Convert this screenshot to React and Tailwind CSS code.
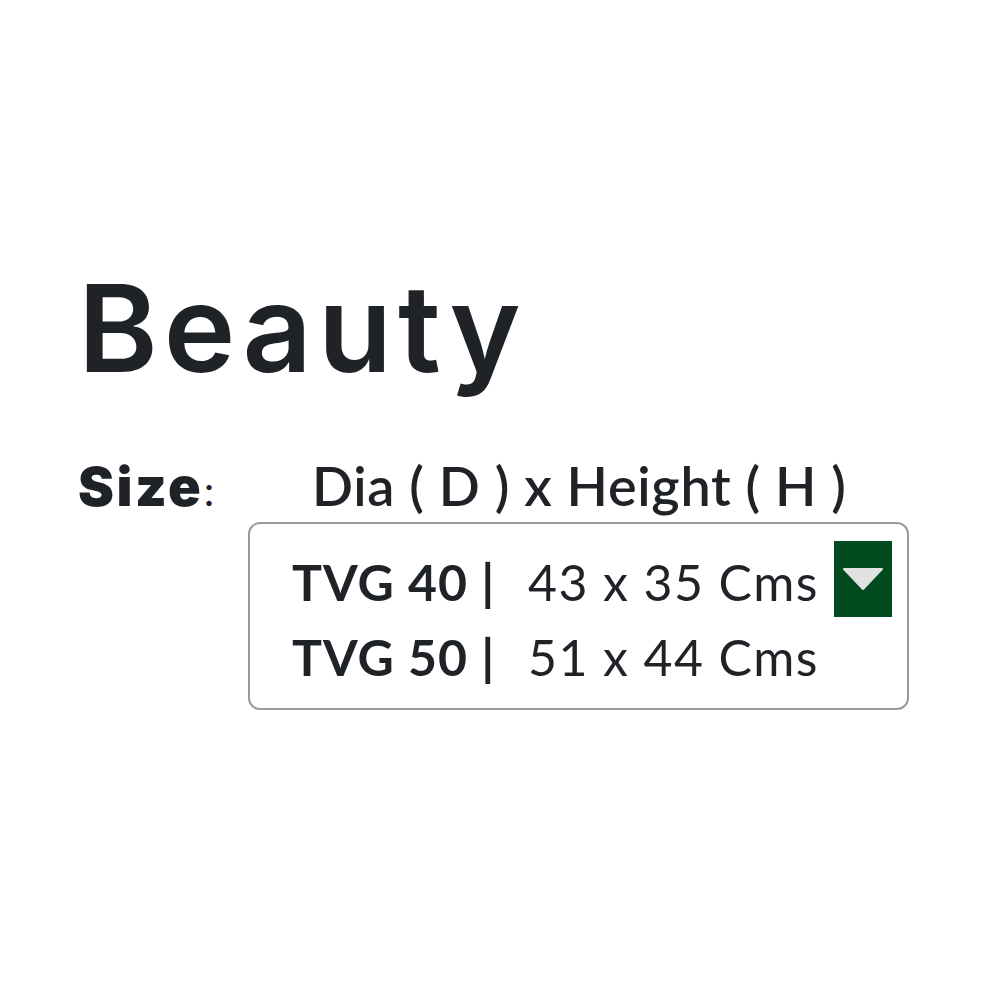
export default function App() {
  return (
    <div className="w-[1000px] h-[1000px] bg-white relative text-[#1f2328]">
      <div className="pl-[78px] pt-[258px]">
        <h1 className="font-['Inter',sans-serif] font-semibold text-[121px] leading-[140px] tracking-[6px]">
          Beauty
        </h1>
        <div className="flex items-baseline mt-[47px] h-[60px] font-['Lato',sans-serif]">
          <span className="font-['Inter',sans-serif] text-[54px] font-black tracking-[2.5px] w-[234px]">
            Size<span className="font-normal text-[40px] tracking-normal">:</span>
          </span>
          <span className="text-[54px] font-semibold tracking-[0.7px]">
            Dia ( D ) x Height ( H )
          </span>
        </div>
        <div className="ml-[170px] mt-[17px] w-[661px] h-[188px] border-2 border-[#9a9a9a] rounded-[12px] pl-[42px] pt-[21px] relative font-['Lato',sans-serif]">
          <div className="flex items-baseline text-[50px] leading-[75px]">
            <span className="font-bold w-[236px] tracking-[1px]">TVG 40 |</span>
            <span className="font-normal tracking-[1.4px]">43 x 35 Cms</span>
          </div>
          <div className="flex items-baseline text-[50px] leading-[75px]">
            <span className="font-bold w-[236px] tracking-[1px]">TVG 50 |</span>
            <span className="font-normal tracking-[1.4px]">51 x 44 Cms</span>
          </div>
          <div className="absolute left-[584px] top-[17px] w-[58px] h-[76px] bg-[#014a1d] flex items-center justify-center">
            <svg width="42" height="24" viewBox="0 0 42 24">
              <path d="M2 2 H40 L21 22 Z" fill="#e2e2e2" stroke="#e2e2e2" strokeWidth="2" strokeLinejoin="round" />
            </svg>
          </div>
        </div>
      </div>
    </div>
  );
}
